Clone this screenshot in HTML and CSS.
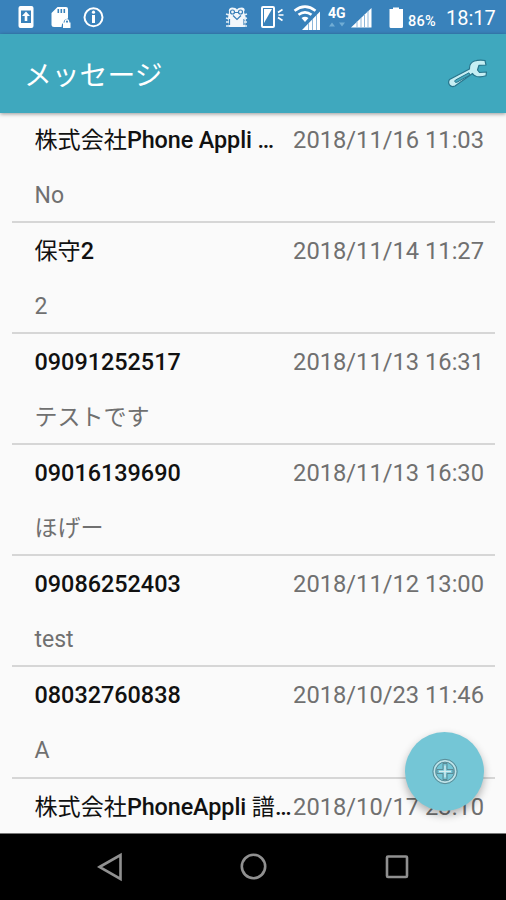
FILE: index.html
```html
<!DOCTYPE html>
<html lang="ja">
<head>
    <meta charset="UTF-8">
    <meta name="viewport" content="width=device-width, initial-scale=1.0">
    <title>メッセージ</title>
    <link rel="stylesheet" href="styles.css">
</head>
<body>
<!-- ステータスバー -->
<div class="status-bar">
    <svg class="status-icons" width="405" height="34" viewBox="0 0 405 34">
        <g fill="#fff">
            <path fill-rule="evenodd" d="M20.500 6h11q2 0 2 2v18q0 2-2 2h-11q-2 0-2-2V8q0-2 2-2zM21 10.500v12.500h10v-12.500z"/>
            <path d="M26 11.500l4 4.500h-2.700v5h-2.600v-5H22z"/>
            <path fill-rule="evenodd" d="M57.500 7H66q2 0 2 2v9.500q-4 .5-4.500 4-2 1-2 4.500H54q-2.500 0-2.500-2V13zM57.500 9v4h1.600V9zM60.500 9v4h1.600V9zM63.500 9v4h1.600V9z"/>
            <path fill-rule="evenodd" d="M64 22.500h.7v-1q0-2.500 2.300-2.500t2.300 2.500v1h1.200v5.500H63v-5.500zM66 22.500h2v-1q0-1-1-1t-1 1z"/>
            <circle cx="93.500" cy="12.200" r="1.600"/>
            <path d="M92 15h3v8h-3z"/>
        </g>
        <circle cx="93.500" cy="17.300" r="9" fill="none" stroke="#fff" stroke-width="2"/>
        <!-- キャラクター -->
        <path d="M229 12q-1-4 3-4.500 4 0 5 2 1-2 5-2 4 .5 2 4.500l2 6-1 9h-16l-1-9z" fill="#f2f7fb"/>
        <g fill="none" stroke="#397fb8" stroke-width="1.200">
            <circle cx="232.500" cy="12" r="2"/>
            <circle cx="240.500" cy="12" r="2"/>
            <path d="M233 15.500l4 4 4-4M234.500 12.500h4M229.500 19v6M244 19v6"/>
        </g>
        <path d="M226 14l3 1M226 18l3 1M226 22h3M226 26h4M247 14l-3 1M247 18l-3 1M247 22h-3M247 26h-4" stroke="#e4eff7" stroke-width="1.500"/>
        <!-- 端末 -->
        <rect x="262" y="7" width="12" height="20" rx="1" fill="none" stroke="#fff" stroke-width="2"/>
        <path d="M264 9h8l-8 14z" fill="#fff"/>
        <path d="M278 12.500l4.500-3M278.500 15h5M278 17.500l4.500 3" stroke="#fff" stroke-width="1.700"/>
        <!-- Wi-Fi -->
        <g fill="none" stroke="#fff" stroke-width="2.600">
            <path d="M294.500 10.700q10.500-8 21 0"/>
            <path d="M298.500 14.800q6.500-5 13 0"/>
        </g>
        <path d="M301.500 18q3.500-2.500 7 0l-3.500 4z" fill="#fff"/>
        <path d="M302 30h18V11.500z" fill="#fff"/>
        <path d="M308.500 23v7M312.500 19v11M316.500 15v15" stroke="#8db7da" stroke-width="1"/>
        <path d="M329 26.500l3-4 3 4zM339 22.500h6l-3 4z" fill="#70add5"/>
        <path d="M351 27.500h20.500V8z" fill="#fff"/>
        <path d="M357 21.500v6M361 18v9.500M364.500 14v13.500M368 11v16.500" stroke="#8db7da" stroke-width="1"/>
        <path d="M393 7.500h6v1.500h4v17.500q0 1.500-1.500 1.500h-10.500q-1.500 0-1.500-1.500V9h3.500z" fill="#fff"/>
        <text class="network" x="328" y="18">4G</text>
    </svg>
    <span class="battery">86%</span>
    <span class="clock">18:17</span>
</div>

<!-- ヘッダー -->
<header class="app-bar">
    <h1 class="title">メッセージ</h1>
    <svg class="wrench" width="42" height="34" viewBox="0 0 42 34">
        <path d="M2.500 23.500L22.500 13q-.5-6 5-8 5-1.500 10.500-.5l1 4.500-7 .3-1.500 4.700 2 2.500 7-.5-.5 3.800q-5 1.700-9.500.7-3-1-4-3L8 30q-3.500 1.500-5.500-1.200-1.800-2.600 0-5.300z" fill="#c5eef3" stroke="#28758c" stroke-width="1.200" stroke-linejoin="round"/>
        <path d="M8.500 24l13.500-7.200 1 2.200-13 7.200q-1.800.5-2.200-.5-.1-1.100.7-1.700z" fill="#42a8bd" stroke="#28758c" stroke-width="1"/>
    </svg>
</header>

<!-- メッセージ一覧 -->
<ul class="message-list">
    <li class="message">
        <div class="message-head"><span class="name"><span class="kanji">株式会社</span><span class="latin">Phone Appli …</span></span><time class="date">2018/11/16 11:03</time></div>
        <p class="body">No</p>
    </li>
    <li class="message">
        <div class="message-head"><span class="name"><span class="kanji">保守</span>2</span><time class="date">2018/11/14 11:27</time></div>
        <p class="body">2</p>
    </li>
    <li class="message">
        <div class="message-head"><span class="name">09091252517</span><time class="date">2018/11/13 16:31</time></div>
        <p class="body">テストです</p>
    </li>
    <li class="message">
        <div class="message-head"><span class="name">09016139690</span><time class="date">2018/11/13 16:30</time></div>
        <p class="body">ほげー</p>
    </li>
    <li class="message">
        <div class="message-head"><span class="name">09086252403</span><time class="date">2018/11/12 13:00</time></div>
        <p class="body">test</p>
    </li>
    <li class="message">
        <div class="message-head"><span class="name">08032760838</span><time class="date">2018/10/23 11:46</time></div>
        <p class="body">A</p>
    </li>
    <li class="message">
        <div class="message-head"><span class="name"><span class="kanji">株式会社</span><span class="latin">PhoneAppli </span><span class="kanji">譜</span><span class="latin">…</span></span><time class="date">2018/10/17 23:10</time></div>
    </li>
</ul>

<button class="fab" aria-label="新規作成">
    <svg width="28" height="28" viewBox="0 0 28 28" fill="none">
        <circle cx="14" cy="13.500" r="10.600" stroke="#c2e2e7" stroke-width="1.600"/>
        <circle cx="14" cy="13.500" r="12.200" stroke="#58858e" stroke-width=".9"/>
        <circle cx="14" cy="13.500" r="9.300" stroke="#58858e" stroke-width=".9"/>
        <path d="M12 5.500v6H6v4h6v6h4v-6h6v-4h-6v-6z" stroke="#58858e" stroke-width=".9"/>
        <path d="M14 7.500v12M8 13.500h12" stroke="#d5ecef" stroke-width="1.500"/>
    </svg>
</button>

<!-- ナビゲーションバー -->
<nav class="nav-bar">
    <svg width="28" height="30" viewBox="0 0 28 30"><path d="M2.500 15L23.500 3v24z"/></svg>
    <svg width="28" height="30" viewBox="0 0 28 30"><circle cx="13.500" cy="14.500" r="11.700"/></svg>
    <svg width="28" height="30" viewBox="0 0 28 30"><rect x="4" y="4.500" width="20" height="20.500" rx="1"/></svg>
</nav>
</body>
</html>
```
FILE: styles.css
```css
* {
    box-sizing: border-box;
}

body {
    font-family: Roboto, "Noto Sans CJK JP", sans-serif;
    margin: 0;
    height: 900px;
    display: flex;
    flex-direction: column;
    overflow: hidden;
    background-color: #fafafa;
}

.status-bar {
    display: flex;
    flex: none;
    height: 34px;
    background-color: #3982bb;
    color: #fff;
}

.status-icons {
    flex: none;
}

.network {
    font-size: 14px;
    font-weight: 700;
    fill: #fff;
}

.battery {
    width: 41px;
    padding-left: 3px;
    font-size: 14.5px;
    font-weight: 500;
    line-height: 43px;
    letter-spacing: 0.3px;
}

.clock {
    font-size: 20px;
    line-height: 36px;
}

.app-bar {
    display: flex;
    flex: none;
    align-items: center;
    justify-content: space-between;
    height: 79px;
    padding: 0 17px 2px 24px;
    background-color: #3fa8be;
    box-shadow: 0 1px 4px rgba(0, 0, 0, 0.4);
    z-index: 1;
}

.title {
    margin: 0;
    font-size: 27.8px;
    font-weight: 400;
    color: #fff;
}

.message-list {
    flex: 1;
    min-height: 0;
    margin: -1px 0 0;
    padding: 0 11px 0 12px;
    overflow: hidden;
    list-style: none;
}

.message {
    height: 111.1px;
    padding: 11px 11px 0 22.5px;
    border-bottom: 2px solid #d6d6d6;
}

.message-head {
    display: flex;
    justify-content: space-between;
    height: 34px;
    font-size: 23.4px;
    line-height: 34px;
    white-space: nowrap;
}

.name {
    font-weight: 500;
    color: #111;
}

.kanji {
    font-size: 23.1px;
    font-weight: 400;
}

.latin {
    letter-spacing: -0.1px;
}

.date {
    font-size: 23.7px;
    color: #707070;
}

.body {
    margin: 22px 0 0;
    font-size: 23px;
    line-height: 34px;
    color: #707070;
}

/* 一覧の上に浮かぶボタン */
.fab {
    position: absolute;
    right: 22px;
    top: 732px;
    display: flex;
    align-items: center;
    justify-content: center;
    width: 79px;
    height: 79px;
    padding: 0;
    border: none;
    border-radius: 50%;
    background-color: #74c6d6;
    box-shadow: 0 4px 8px rgba(0, 0, 0, 0.3);
    z-index: 2;
}

.nav-bar {
    display: flex;
    flex: none;
    justify-content: space-between;
    align-items: center;
    height: 67px;
    padding: 0 95px 0 97px;
    border-top: 1px solid #777;
    background-color: #000;
}

.nav-bar svg {
    fill: none;
    stroke: #909090;
    stroke-width: 2.6;
}
```
